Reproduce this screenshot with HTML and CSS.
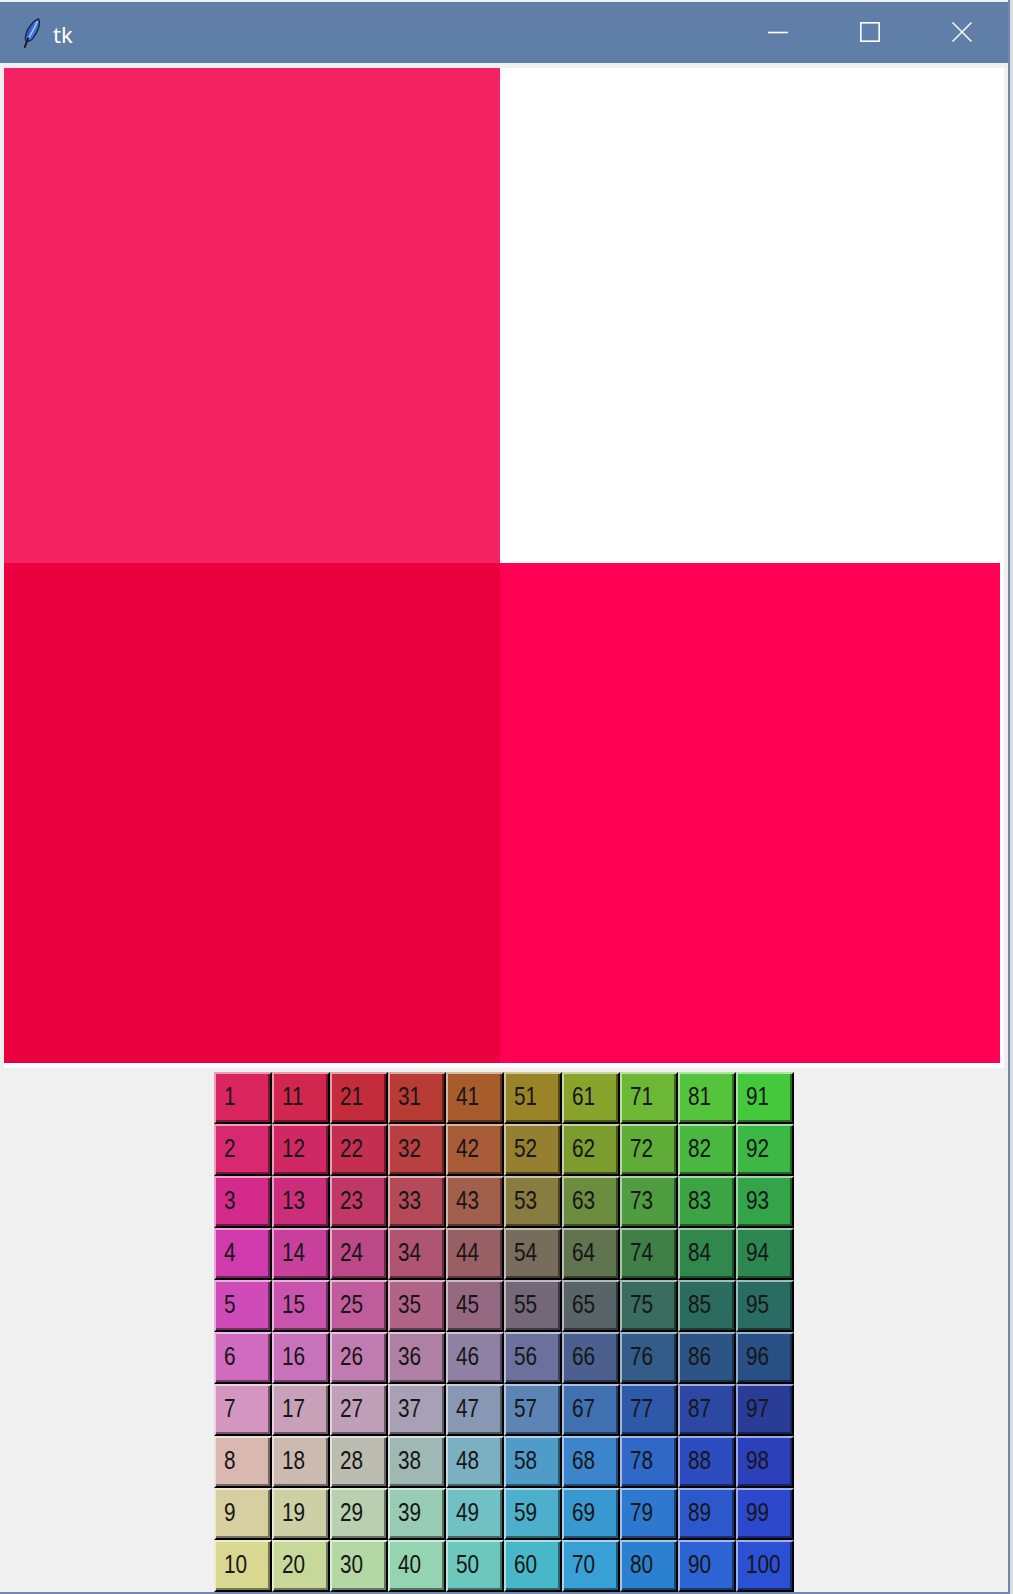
FILE: index.html
```html
<!DOCTYPE html>
<html>
<head>
<meta charset="utf-8">
<title>tk</title>
<link rel="stylesheet" href="styles.css">
</head>
<body>
<div class="window">
  <div class="titlebar">
    <svg class="feather" width="20" height="30" viewBox="0 0 20 30">
      <path d="M17.5 0.8 C20 6 16.5 15 11.5 20.8 C9 23.6 5.2 24.2 4.6 21.8 C3.6 15.5 9.5 4 17.5 0.8 Z" fill="#3f74d8" stroke="#16223a" stroke-width="1.3"/>
      <path d="M16.5 3 C14.5 8 11.5 13.5 8 19.5" fill="none" stroke="#a8ccf8" stroke-width="1.4"/>
      <path d="M12.5 6 C10 10 7.5 14 6.5 18" fill="none" stroke="#2a54a8" stroke-width="1"/>
      <path d="M7 20.5 L3.8 29" stroke="#141a26" stroke-width="2" stroke-linecap="round"/>
    </svg>
    <span class="title">tk</span>
    <div class="spacer"></div>
    <div class="capbtn">
      <svg width="20" height="20" viewBox="0 0 20 20"><line x1="0" y1="10.5" x2="20" y2="10.5" stroke="#ffffff" stroke-width="1.6"/></svg>
    </div>
    <div class="capbtn">
      <svg width="20" height="20" viewBox="0 0 20 20"><rect x="0.8" y="0.8" width="18.4" height="18.4" fill="none" stroke="#ffffff" stroke-width="1.6"/></svg>
    </div>
    <div class="capbtn">
      <svg width="20" height="20" viewBox="0 0 20 20"><path d="M0.5 0.5 L19.5 19.5 M19.5 0.5 L0.5 19.5" stroke="#ffffff" stroke-width="1.5"/></svg>
    </div>
  </div>
  <div class="content">
    <div class="canvas">
      <div class="sq sq-tl"></div>
      <div class="sq sq-tr"></div>
      <div class="sq sq-bl"></div>
      <div class="sq sq-br"></div>
    </div>
    <div class="grid">
      <div class="btn" style="--c:#da2560"><span>1</span></div>
      <div class="btn" style="--c:#d82870"><span>2</span></div>
      <div class="btn" style="--c:#d42a8c"><span>3</span></div>
      <div class="btn" style="--c:#d03aaa"><span>4</span></div>
      <div class="btn" style="--c:#cf4cb8"><span>5</span></div>
      <div class="btn" style="--c:#d06cc0"><span>6</span></div>
      <div class="btn" style="--c:#d496c0"><span>7</span></div>
      <div class="btn" style="--c:#d8b8b0"><span>8</span></div>
      <div class="btn" style="--c:#d8cfa0"><span>9</span></div>
      <div class="btn" style="--c:#d8d890"><span>10</span></div>

      <div class="btn" style="--c:#d2264e"><span>11</span></div>
      <div class="btn" style="--c:#d02862"><span>12</span></div>
      <div class="btn" style="--c:#cc2e7c"><span>13</span></div>
      <div class="btn" style="--c:#c8409c"><span>14</span></div>
      <div class="btn" style="--c:#c854ae"><span>15</span></div>
      <div class="btn" style="--c:#c872bc"><span>16</span></div>
      <div class="btn" style="--c:#c8a0b8"><span>17</span></div>
      <div class="btn" style="--c:#ccbab0"><span>18</span></div>
      <div class="btn" style="--c:#ccd0a4"><span>19</span></div>
      <div class="btn" style="--c:#c8d898"><span>20</span></div>

      <div class="btn" style="--c:#c42c3c"><span>21</span></div>
      <div class="btn" style="--c:#c42e50"><span>22</span></div>
      <div class="btn" style="--c:#c03868"><span>23</span></div>
      <div class="btn" style="--c:#bc4888"><span>24</span></div>
      <div class="btn" style="--c:#c05c9c"><span>25</span></div>
      <div class="btn" style="--c:#c07cb0"><span>26</span></div>
      <div class="btn" style="--c:#c0a0b8"><span>27</span></div>
      <div class="btn" style="--c:#bcbcb0"><span>28</span></div>
      <div class="btn" style="--c:#b8d0b0"><span>29</span></div>
      <div class="btn" style="--c:#b4d8a4"><span>30</span></div>

      <div class="btn" style="--c:#b83c34"><span>31</span></div>
      <div class="btn" style="--c:#b84040"><span>32</span></div>
      <div class="btn" style="--c:#b44a58"><span>33</span></div>
      <div class="btn" style="--c:#b05474"><span>34</span></div>
      <div class="btn" style="--c:#b06488"><span>35</span></div>
      <div class="btn" style="--c:#b080a4"><span>36</span></div>
      <div class="btn" style="--c:#a8a0b4"><span>37</span></div>
      <div class="btn" style="--c:#a0b8b4"><span>38</span></div>
      <div class="btn" style="--c:#98ccb4"><span>39</span></div>
      <div class="btn" style="--c:#94d4b0"><span>40</span></div>

      <div class="btn" style="--c:#a85c2c"><span>41</span></div>
      <div class="btn" style="--c:#a85c38"><span>42</span></div>
      <div class="btn" style="--c:#a0604c"><span>43</span></div>
      <div class="btn" style="--c:#986064"><span>44</span></div>
      <div class="btn" style="--c:#946880"><span>45</span></div>
      <div class="btn" style="--c:#9080a4"><span>46</span></div>
      <div class="btn" style="--c:#8898b4"><span>47</span></div>
      <div class="btn" style="--c:#7cb0c0"><span>48</span></div>
      <div class="btn" style="--c:#70c0c4"><span>49</span></div>
      <div class="btn" style="--c:#6cc8bc"><span>50</span></div>

      <div class="btn" style="--c:#9a8428"><span>51</span></div>
      <div class="btn" style="--c:#948030"><span>52</span></div>
      <div class="btn" style="--c:#887c40"><span>53</span></div>
      <div class="btn" style="--c:#786c5c"><span>54</span></div>
      <div class="btn" style="--c:#746878"><span>55</span></div>
      <div class="btn" style="--c:#6c709c"><span>56</span></div>
      <div class="btn" style="--c:#5c84b4"><span>57</span></div>
      <div class="btn" style="--c:#509cc8"><span>58</span></div>
      <div class="btn" style="--c:#4cb0cc"><span>59</span></div>
      <div class="btn" style="--c:#48b8c8"><span>60</span></div>

      <div class="btn" style="--c:#88a42c"><span>61</span></div>
      <div class="btn" style="--c:#7c9c30"><span>62</span></div>
      <div class="btn" style="--c:#6c8c40"><span>63</span></div>
      <div class="btn" style="--c:#607450"><span>64</span></div>
      <div class="btn" style="--c:#586468"><span>65</span></div>
      <div class="btn" style="--c:#4c6090"><span>66</span></div>
      <div class="btn" style="--c:#4070b0"><span>67</span></div>
      <div class="btn" style="--c:#3c84cc"><span>68</span></div>
      <div class="btn" style="--c:#3898d0"><span>69</span></div>
      <div class="btn" style="--c:#38a0d4"><span>70</span></div>

      <div class="btn" style="--c:#6cb834"><span>71</span></div>
      <div class="btn" style="--c:#60ac38"><span>72</span></div>
      <div class="btn" style="--c:#509c40"><span>73</span></div>
      <div class="btn" style="--c:#408048"><span>74</span></div>
      <div class="btn" style="--c:#3a6c60"><span>75</span></div>
      <div class="btn" style="--c:#345c88"><span>76</span></div>
      <div class="btn" style="--c:#3058a8"><span>77</span></div>
      <div class="btn" style="--c:#3068c8"><span>78</span></div>
      <div class="btn" style="--c:#2e78d0"><span>79</span></div>
      <div class="btn" style="--c:#2c80d0"><span>80</span></div>

      <div class="btn" style="--c:#54c43c"><span>81</span></div>
      <div class="btn" style="--c:#48b840"><span>82</span></div>
      <div class="btn" style="--c:#3ca444"><span>83</span></div>
      <div class="btn" style="--c:#30884c"><span>84</span></div>
      <div class="btn" style="--c:#2c6c60"><span>85</span></div>
      <div class="btn" style="--c:#2c5484"><span>86</span></div>
      <div class="btn" style="--c:#2c48a4"><span>87</span></div>
      <div class="btn" style="--c:#2c4cc0"><span>88</span></div>
      <div class="btn" style="--c:#2c58cc"><span>89</span></div>
      <div class="btn" style="--c:#2c64d4"><span>90</span></div>

      <div class="btn" style="--c:#44c83c"><span>91</span></div>
      <div class="btn" style="--c:#3cb844"><span>92</span></div>
      <div class="btn" style="--c:#34a448"><span>93</span></div>
      <div class="btn" style="--c:#2c8850"><span>94</span></div>
      <div class="btn" style="--c:#286c64"><span>95</span></div>
      <div class="btn" style="--c:#285084"><span>96</span></div>
      <div class="btn" style="--c:#283c98"><span>97</span></div>
      <div class="btn" style="--c:#2c40bc"><span>98</span></div>
      <div class="btn" style="--c:#2c48cc"><span>99</span></div>
      <div class="btn" style="--c:#2c50d4"><span>100</span></div>
    </div>
  </div>
</div>
</body>
</html>
```

FILE: styles.css
```css
html, body {
  margin: 0;
  padding: 0;
}
body {
  width: 1013px;
  height: 1594px;
  background: #dcdcdc;
  overflow: hidden;
  font-family: "Liberation Sans", Arial, sans-serif;
}
.window {
  box-sizing: border-box;
  width: 1010px;
  height: 1594px;
  padding-top: 2px;
  border-right: 2px solid #7189b1;
  border-bottom: 2px solid #7189b1;
  background: #f0f0f0;
  display: flex;
  flex-direction: column;
}
.titlebar {
  height: 61px;
  flex: none;
  background: #5f7fa8;
  display: flex;
  align-items: center;
}
.feather {
  margin-left: 21px;
  flex: none;
}
.title {
  margin-left: 12px;
  margin-top: 2px;
  font-family: "Noto Sans", "Open Sans", sans-serif;
  font-size: 22px;
  color: #ffffff;
}
.spacer {
  flex: 1;
}
.capbtn {
  width: 92px;
  height: 61px;
  display: flex;
  align-items: center;
  justify-content: center;
}
.capbtn svg {
  margin-top: -1px;
}
.content {
  flex: 1;
  display: flex;
  flex-direction: column;
  align-items: center;
  padding-top: 5px;
}
.canvas {
  width: 1000px;
  height: 1000px;
  background: #ffffff;
  display: grid;
  grid-template-columns: 496px 500px;
  grid-template-rows: 495px 500px;
  align-self: flex-start;
  margin-left: 4px;
}
.sq-tl { background: #f52263; }
.sq-tr { background: #ffffff; }
.sq-bl { background: #eb0040; }
.sq-br { background: #ff0055; }
.grid {
  margin-top: 4px;
  display: grid;
  grid-auto-flow: column;
  grid-template-rows: repeat(10, 52px);
  grid-template-columns: repeat(10, 58px);
}
.btn {
  box-sizing: border-box;
  width: 58px;
  height: 52px;
  background: var(--c);
  border-style: solid;
  border-width: 2px;
  border-color: color-mix(in srgb, var(--c) 45%, white) #000000 #000000 color-mix(in srgb, var(--c) 45%, white);
  box-shadow: inset -2px -2px 0 color-mix(in srgb, var(--c) 55%, black);
  display: flex;
  align-items: center;
  padding-left: 8px;
  padding-bottom: 3px;
  overflow: hidden;
}
.btn span {
  display: inline-block;
  font-size: 25px;
  line-height: 1;
  color: #161616;
  transform: scaleX(0.83);
  transform-origin: left center;
  white-space: nowrap;
}
```
